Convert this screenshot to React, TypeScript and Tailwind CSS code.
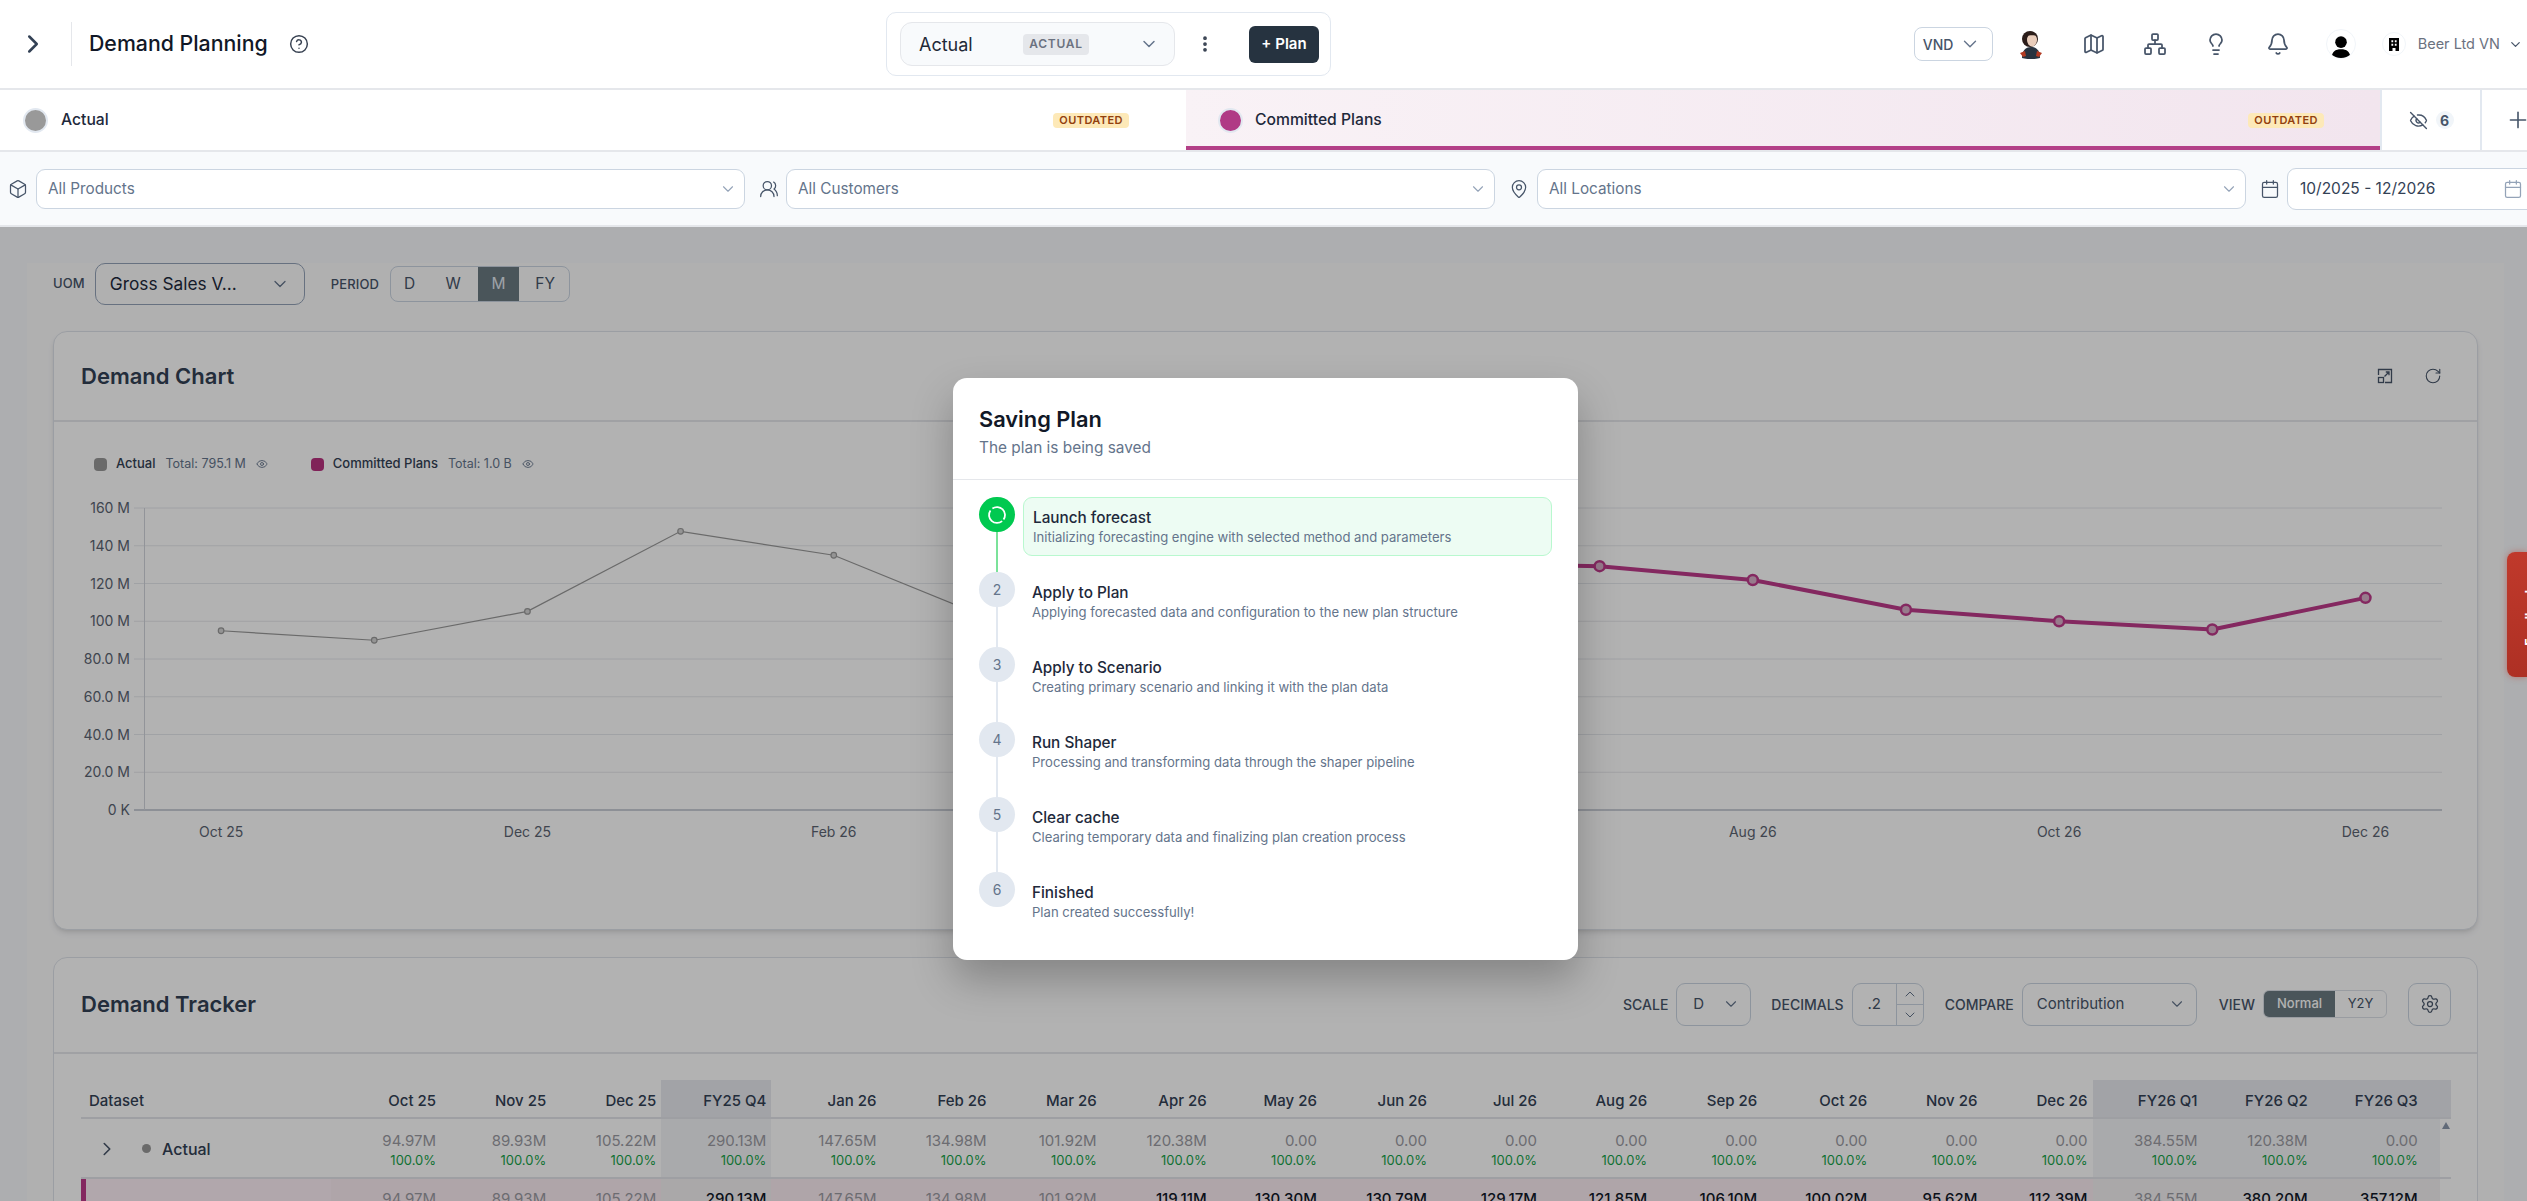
import React from "react";
import { ChevronRight, ChevronDown, ChevronUp, CircleHelp, EllipsisVertical, Map as MapIcon, Network, Lightbulb, Bell, EyeOff, Eye, Plus, Box, UsersRound, MapPin, Calendar, RotateCw, Settings } from "lucide-react";

const BADGE = "rounded-[4px] bg-[#fde9b8] px-[6px] h-[15px] flex items-center text-[11px] font-semibold tracking-[0.04em] text-[#92400e]";

function Outdated() {
  return <span className={BADGE}>OUTDATED</span>;
}

function Dot({ color }: { color: string }) {
  return <span className="block w-[25px] h-[25px] rounded-full border-2 border-[#e2e8f0]" style={{ background: color }} />;
}

function Avatar() {
  return (
    <svg width="30" height="30" viewBox="0 0 30 30">
      <circle cx="14" cy="10" r="8" fill="#2b1d1a" />
      <ellipse cx="16" cy="11" rx="5" ry="6.5" fill="#e9cdbb" />
      <path d="M10.5 7c2-4 9-4 11 0-3-1-8-1-11 0z" fill="#2b1d1a" />
      <path d="M6 29c0-7 3-11 9-11s9 4 9 11c-4 1.500-14 1.500-18 0z" fill="#28333f" />
      <path d="M4 24l5-2 1 5-3 1zM26 24l-5-2-1 5 3 1z" fill="#b23a22" />
    </svg>
  );
}

function UserBlack() {
  return (
    <div className="w-[30px] h-[30px] rounded-full border border-[#f1f5f9] overflow-hidden flex items-center justify-center">
      <svg width="30" height="30" viewBox="0 0 30 30">
        <circle cx="15" cy="13" r="6.2" fill="#000" />
        <path d="M5 30c0-7 4-9.500 10-9.500S25 23 25 30z" fill="#000" />
      </svg>
    </div>
  );
}

function Building() {
  return (
    <div className="w-[24px] h-[24px] rounded-full border border-[#f1f5f9] flex items-center justify-center">
      <svg width="12" height="13" viewBox="0 0 12 13">
        <path fillRule="evenodd" d="M1 0h10v13H7.500v-3h-3v3H1zM3.400 2.200v2h1.800v-2zM6.800 2.200v2h1.800v-2zM3.400 5.800v2h1.800v-2zM6.800 5.800v2h1.800v-2z" fill="#000" />
      </svg>
    </div>
  );
}

function Header() {
  return (
    <header className="flex h-[90px] shrink-0 items-center border-b-[2px] border-[#e5e7eb] bg-white">
      <div className="flex w-[886px] shrink-0 items-center">
        <div className="flex w-[72px] h-[44px] items-center justify-center border-r border-[#e5e7eb]">
          <ChevronRight size={30} strokeWidth={2} className="text-[#334155] mr-[6px]" />
        </div>
        <h1 className="ml-[17px] text-[21.300px] leading-none font-[450] text-[#111827]">Demand Planning</h1>
        <CircleHelp size={20} strokeWidth={1.75} className="ml-[21px] text-[#374151]" />
      </div>
      <div className="flex w-[445px] h-[64px] shrink-0 items-center rounded-[10px] border border-[#e2e8f0] pl-[13px]">
        <div className="flex w-[275px] h-[44px] items-center rounded-[12px] border border-[#e5e7eb] bg-[#f8fafc] pl-[18px]">
          <span className="w-[104px] text-[18px] text-[#1f2937]">Actual</span>
          <span className="flex h-[21px] w-[66px] items-center justify-center rounded-[4px] bg-[#e5e7eb] text-[12px] font-semibold tracking-[0.06em] text-[#6b7280]">ACTUAL</span>
          <ChevronDown size={20} strokeWidth={1.75} className="ml-[50px] text-[#64748b]" />
        </div>
        <EllipsisVertical size={20} strokeWidth={2.500} className="ml-[20px] text-[#374151]" />
        <button className="ml-[34px] flex h-[37px] w-[70px] items-center justify-center rounded-[6px] bg-[#263340] text-[15px] font-semibold text-white">+ Plan</button>
      </div>
      <div className="ml-auto flex items-center pr-[4px]">
        <div className="flex h-[34px] w-[79px] items-center rounded-[8px] border border-[#cbd5e1] pl-[8px]">
          <span className="text-[14px] font-medium text-[#475569]">VND</span>
          <ChevronDown size={22} strokeWidth={1.5} className="ml-[6px] text-[#64748b]" />
        </div>
        <div className="ml-[23px]"><Avatar /></div>
        <MapIcon size={24} strokeWidth={1.75} className="ml-[36px] text-[#475569]" />
        <Network size={24} strokeWidth={1.75} className="ml-[37px] text-[#475569]" />
        <Lightbulb size={24} strokeWidth={1.75} className="ml-[37px] text-[#475569]" />
        <Bell size={24} strokeWidth={1.75} className="ml-[38px] text-[#475569]" />
        <div className="ml-[36px]"><UserBlack /></div>
        <div className="ml-[26px]"><Building /></div>
        <span className="ml-[12px] text-[14.500px] text-[#6b7280]">Beer Ltd VN</span>
        <ChevronDown size={15} strokeWidth={2} className="ml-[8px] text-[#475569]" />
      </div>
    </header>
  );
}

function Tabs() {
  return (
    <div className="flex h-[62px] shrink-0 border-b-[2px] border-[#e5e7eb] bg-white">
      <div className="flex w-[1186px] shrink-0 items-center justify-between pl-[23px] pr-[57px]">
        <div className="flex items-center gap-[13px]">
          <Dot color="#999999" />
          <span className="text-[15.700px] font-[450] text-[#1e293b]">Actual</span>
        </div>
        <Outdated />
      </div>
      <div className="flex w-[1194px] shrink-0 items-center justify-between border-b-[4px] border-[#b33f87] bg-gradient-to-r from-[#f9f2f6] to-[#f2e5ee] pl-[32px] pr-[56px] pt-[4px]">
        <div className="flex items-center gap-[12px]">
          <Dot color="#b03a85" />
          <span className="text-[15.700px] font-[450] text-[#1e293b]">Committed Plans</span>
        </div>
        <Outdated />
      </div>
      <div className="flex w-[102px] shrink-0 items-center justify-center gap-[8px] border-x-[2px] border-[#e2e8f0]">
        <EyeOff size={19} strokeWidth={1.75} className="text-[#475569]" />
        <span className="flex h-[18px] w-[18px] items-center justify-center rounded-full bg-[#f1f5f9] text-[14px] font-bold text-[#475569]">6</span>
      </div>
      <div className="flex flex-1 items-center pl-[23px]">
        <Plus size={26} strokeWidth={1.5} className="shrink-0 text-[#475569]" />
      </div>
    </div>
  );
}

function FilterSelect({ label }: { label: string }) {
  return (
    <div className="flex h-[40px] w-[709px] shrink-0 items-center justify-between rounded-[9px] border border-[#cbd5e1] bg-white pl-[11px] pr-[7px]">
      <span className="pt-[1px] text-[15.300px] text-[#64748b]">{label}</span>
      <ChevronDown size={18} strokeWidth={1.5} className="text-[#94a3b8]" />
    </div>
  );
}

function Filters() {
  return (
    <div className="flex h-[75px] shrink-0 items-center border-b-[2px] border-[#e5e7eb] bg-[#f8fafc] pl-[8px]">
      <Box size={20} strokeWidth={1.5} className="shrink-0 text-[#475569]" />
      <div className="ml-[8px]"><FilterSelect label="All Products" /></div>
      <UsersRound size={20} strokeWidth={1.5} className="ml-[14px] shrink-0 text-[#475569]" />
      <div className="ml-[7px]"><FilterSelect label="All Customers" /></div>
      <MapPin size={20} strokeWidth={1.5} className="ml-[14px] shrink-0 text-[#475569]" />
      <div className="ml-[8px]"><FilterSelect label="All Locations" /></div>
      <Calendar size={20} strokeWidth={1.5} className="ml-[14px] shrink-0 text-[#475569]" />
      <div className="ml-[7px] flex h-[42px] w-[260px] shrink-0 items-center justify-between rounded-[9px] border border-[#cbd5e1] bg-white pl-[12px] pr-[23px]">
        <span className="text-[15.500px] text-[#334155]">10/2025 - 12/2026</span>
        <Calendar size={20} strokeWidth={1.5} className="text-[#94a3b8]" />
      </div>
    </div>
  );
}

function Label({ children }: { children: React.ReactNode }) {
  return <span className="text-[13px] font-medium tracking-[0.01em] text-[#475569]">{children}</span>;
}

function BigLabel({ children }: { children: React.ReactNode }) {
  return <span className="text-[14px] font-medium text-[#475569]">{children}</span>;
}

function Toolbar() {
  return (
    <div className="flex h-[42px] items-center">
      <Label>UOM</Label>
      <div className="ml-[10px] flex h-[42px] w-[210px] items-center justify-between rounded-[10px] border border-[#94a3b8] pl-[14px] pr-[14px]">
        <span className="text-[17.300px] text-[#1e293b]">Gross Sales V...</span>
        <ChevronDown size={20} strokeWidth={1.5} className="text-[#64748b]" />
      </div>
      <span className="ml-[26px] pb-[2px]"><Label>PERIOD</Label></span>
      <div className="ml-[11px] flex h-[36px] w-[180px] items-center overflow-hidden rounded-[8px] border border-[#cbd5e1] text-[15.500px] text-[#475569]">
        <span className="flex w-[37px] justify-center">D</span>
        <span className="flex w-[50px] justify-center">W</span>
        <span className="flex h-full w-[41px] items-center justify-center bg-[#6b7a81] text-[#e2e8f0]">M</span>
        <span className="flex flex-1 justify-center pl-[2px]">FY</span>
      </div>
    </div>
  );
}

const ORIGIN_X = 53;
const ORIGIN_Y = 490;
const colX = (i: number) => 144.500 + 153.170 * (i + 0.500);
const yOf = (v: number) => 810 - v * 1.8875;
const ACTUAL = [94.970, 89.930, 105.220, 147.650, 134.980, 101.920, 120.380];
const COMMITTED = [119.110, 130.300, 130.790, 129.170, 121.850, 106.100, 100.020, 95.620, 112.390];
const YL = ["160 M", "140 M", "120 M", "100 M", "80.0 M", "60.0 M", "40.0 M", "20.0 M", "0 K"];
const XL = ["Oct 25", "", "Dec 25", "", "Feb 26", "", "Apr 26", "", "Jun 26", "", "Aug 26", "", "Oct 26", "", "Dec 26"];

function ChartSvg() {
  const actual = ACTUAL.map((v, i) => `${colX(i)},${yOf(v)}`).join(" ");
  const committed = COMMITTED.map((v, i) => `${colX(i + 6)},${yOf(v)}`).join(" ");
  return (
    <svg width="2424" height="370" viewBox={`${ORIGIN_X} ${ORIGIN_Y} 2424 370`} className="block">
      {YL.map((l, i) => {
        const y = 508 + 37.750 * i;
        return (
          <g key={l}>
            <line x1="134" x2="2442" y1={y} y2={y} stroke={i === 8 ? "#b8bfca" : "#e6e8ec"} strokeWidth={i === 8 ? 1.500 : 1} />
            <text x="130" y={y + 5} textAnchor="end" fontSize="14" fill="#5b6472">{l}</text>
          </g>
        );
      })}
      <line x1="144.500" x2="144.500" y1="508" y2="810" stroke="#d1d5db" />
      {XL.map((l, i) => l && <text key={l} x={colX(i)} y="837" textAnchor="middle" fontSize="14" fill="#5b6472">{l}</text>)}
      <polyline points={committed} fill="none" stroke="#bd3a8a" strokeWidth="4" />
      {COMMITTED.map((v, i) => <circle key={i} cx={colX(i + 6)} cy={yOf(v)} r="5" fill="#d9b0c9" stroke="#bd3a8a" strokeWidth="2.500" />)}
      <polyline points={actual} fill="none" stroke="#999999" strokeWidth="1.200" />
      {ACTUAL.map((v, i) => <circle key={i} cx={colX(i)} cy={yOf(v)} r="2.800" fill="#d4d4d4" stroke="#999999" strokeWidth="1.200" />)}
    </svg>
  );
}

function ExpandIcon() {
  return (
    <svg width="18" height="18" viewBox="0 0 18 18" fill="none" stroke="#475569" strokeWidth="1.300">
      <path d="M6 2.500h9.500v13H9" />
      <path d="M2.500 8V2.500H6" />
      <rect x="2.500" y="10.500" width="5" height="5" />
      <path d="M8.500 9.500L13 5M9.800 5H13v3.200" />
    </svg>
  );
}

function LegendItem({ color, name, total }: { color: string; name: string; total: string }) {
  return (
    <div className="flex items-center">
      <span className="h-[13px] w-[13px] rounded-[4px]" style={{ background: color }} />
      <span className="ml-[9px] text-[13px] font-[450] text-[#334155]">{name}</span>
      <span className="ml-[10px] text-[12.500px] whitespace-nowrap text-[#64748b]">{total}</span>
      <Eye size={12} strokeWidth={1.75} className="ml-[10px] text-[#64748b]" />
    </div>
  );
}

function ChartCard() {
  return (
    <section className="mt-[26px] h-[599px] overflow-hidden rounded-[14px] border border-[#dfe3ea] bg-white shadow-md">
      <div className="flex h-[90px] items-center justify-between border-b-[2px] border-[#e5e7eb] pl-[27px] pr-[35px]">
        <h2 className="text-[22px] font-semibold text-[#334155]">Demand Chart</h2>
        <div className="flex items-center gap-[30px]">
          <ExpandIcon />
          <RotateCw size={18} strokeWidth={1.5} className="text-[#475569]" />
        </div>
      </div>
      <div className="pt-[32px]">
        <div className="flex h-[20px] items-center gap-[43px] pl-[40px]">
          <LegendItem color="#999999" name="Actual" total="Total: 795.1 M" />
          <LegendItem color="#b8327f" name="Committed Plans" total="Total: 1.0 B" />
        </div>
        <div className="mt-[16px] -ml-px"><ChartSvg /></div>
      </div>
    </section>
  );
}

const HEAD = ["Oct 25", "Nov 25", "Dec 25", "FY25 Q4", "Jan 26", "Feb 26", "Mar 26", "Apr 26", "May 26", "Jun 26", "Jul 26", "Aug 26", "Sep 26", "Oct 26", "Nov 26", "Dec 26", "FY26 Q1", "FY26 Q2", "FY26 Q3"];
const ROW1 = ["94.97M", "89.93M", "105.22M", "290.13M", "147.65M", "134.98M", "101.92M", "120.38M", "0.00", "0.00", "0.00", "0.00", "0.00", "0.00", "0.00", "0.00", "384.55M", "120.38M", "0.00"];
const ROW2 = ["94.97M", "89.93M", "105.22M", "290.13M", "147.65M", "134.98M", "101.92M", "119.11M", "130.30M", "130.79M", "129.17M", "121.85M", "106.10M", "100.02M", "95.62M", "112.39M", "384.55M", "380.20M", "357.12M"];
const isFy = (i: number) => i === 3 || i >= 16;
const isDark2 = (i: number) => i === 3 || (i >= 7 && i !== 16);

function TrackerTable() {
  return (
    <div className="ml-[27px] mr-[26px] mt-[26px]">
      <div className="flex h-[39px] border-b-[2px] border-[#e2e4ea] text-[15px] font-[450] text-[#334155]">
        <div className="flex w-[250px] shrink-0 items-center pl-[8px] pt-[5px]">Dataset</div>
        {HEAD.map((h, i) => (
          <div key={h} className={`flex h-full w-[110.100px] shrink-0 items-center justify-end pr-[5px] pt-[5px] ${isFy(i) ? "bg-[#e8eaf0]" : ""}`}>{h}</div>
        ))}
        <div className="h-full flex-1 bg-[#e8eaf0]" />
      </div>
      <div className="flex h-[60px] border-b-[2px] border-[#e2e4ea]">
        <div className="flex w-[250px] shrink-0 items-center pl-[15px] pt-[1px]">
          <ChevronRight size={22} strokeWidth={1.75} className="text-[#475569]" />
          <span className="ml-[24px] h-[9px] w-[9px] rounded-full bg-[#999999]" />
          <span className="ml-[11px] text-[16px] font-[450] text-[#334155]">Actual</span>
        </div>
        {ROW1.map((v, i) => (
          <div key={i} className={`w-[110.100px] shrink-0 pr-[5px] pt-[13px] text-right ${isFy(i) ? "bg-[#f3f4f6]" : ""}`}>
            <div className="text-[15px] leading-[18px] text-[#9b9ba3]">{v}</div>
            <div className="text-[13px] leading-[20px] text-[#16a34a]">100.0%</div>
          </div>
        ))}
        <div className="w-[17px] shrink-0 bg-[#f3f4f6]" />
        <div className="relative flex-1"><span className="absolute left-[2px] top-[3px] h-0 w-0 border-x-[4px] border-b-[7px] border-x-transparent border-b-[#8c99ad]" /></div>
      </div>
      <div className="flex h-[60px]">
        <div className="w-[250px] shrink-0 border-l-[5px] border-[#bd3a8a] bg-[#fef0f7]" />
        {ROW2.map((v, i) => (
          <div key={i} className={`w-[110.100px] shrink-0 pr-[5px] pt-[10px] text-right text-[15px] leading-[20px] ${isFy(i) ? "bg-[#f4f1f3]" : "bg-[#fbecf2]"} ${isDark2(i) ? "font-[450] text-[#111827]" : "text-[#9b9ba3]"}`}>{v}</div>
        ))}
        <div className="w-[17px] shrink-0 bg-[#f4f1f3]" />
      </div>
    </div>
  );
}

function TrackerCard() {
  return (
    <section className="mt-[27px] rounded-[14px] border border-[#dfe3ea] bg-white">
      <div className="flex h-[96px] items-center justify-between border-b-[2px] border-[#e5e7eb] pl-[27px] pr-[26px]">
        <h2 className="pb-[2px] text-[22px] font-semibold text-[#334155]">Demand Tracker</h2>
        <div className="flex items-center pb-[2px]">
          <BigLabel>SCALE</BigLabel>
          <div className="ml-[8px] flex h-[43px] w-[75px] items-center justify-between rounded-[9px] border border-[#cbd5e1] pl-[16px] pr-[10px]">
            <span className="text-[15px] text-[#475569]">D</span>
            <ChevronDown size={18} strokeWidth={1.5} className="text-[#64748b]" />
          </div>
          <span className="ml-[20px]"><BigLabel>DECIMALS</BigLabel></span>
          <div className="ml-[8px] flex h-[43px] w-[72px] rounded-[9px] border border-[#cbd5e1]">
            <span className="flex w-[43px] items-center justify-center text-[15px] text-[#475569]">.2</span>
            <div className="flex flex-1 flex-col border-l border-[#cbd5e1]">
              <span className="flex flex-1 items-center justify-center border-b border-[#cbd5e1]"><ChevronUp size={16} strokeWidth={1.5} className="text-[#64748b]" /></span>
              <span className="flex flex-1 items-center justify-center"><ChevronDown size={16} strokeWidth={1.5} className="text-[#64748b]" /></span>
            </div>
          </div>
          <span className="ml-[21px]"><BigLabel>COMPARE</BigLabel></span>
          <div className="ml-[8px] flex h-[43px] w-[175px] items-center justify-between rounded-[9px] border border-[#cbd5e1] pl-[14px] pr-[10px]">
            <span className="text-[15px] text-[#475569]">Contribution</span>
            <ChevronDown size={18} strokeWidth={1.5} className="text-[#64748b]" />
          </div>
          <span className="ml-[22px]"><BigLabel>VIEW</BigLabel></span>
          <div className="ml-[8px] flex h-[28px] w-[124px] items-center overflow-hidden rounded-[6px] border border-[#dbe0e7] text-[13px]">
            <span className="flex h-full w-[71px] items-center justify-center bg-[#6b7a81] font-medium text-white">Normal</span>
            <span className="flex flex-1 justify-center text-[#475569]">Y2Y</span>
          </div>
          <div className="ml-[21px] flex h-[43px] w-[43px] items-center justify-center rounded-[9px] border border-[#cbd5e1]">
            <Settings size={20} strokeWidth={1.5} className="text-[#475569]" />
          </div>
        </div>
      </div>
      <TrackerTable />
    </section>
  );
}

const STEPS = [
  ["Launch forecast", "Initializing forecasting engine with selected method and parameters"],
  ["Apply to Plan", "Applying forecasted data and configuration to the new plan structure"],
  ["Apply to Scenario", "Creating primary scenario and linking it with the plan data"],
  ["Run Shaper", "Processing and transforming data through the shaper pipeline"],
  ["Clear cache", "Clearing temporary data and finalizing plan creation process"],
  ["Finished", "Plan created successfully!"],
];

function Spinner() {
  return (
    <svg width="20" height="20" viewBox="0 0 20 20" fill="none" stroke="#ffffff" strokeWidth="1.750">
      <path d="M5.410 3.450A8 8 0 0 1 16.550 14.590" />
      <path d="M15.140 16.130A8 8 0 0 1 3.450 5.410" />
    </svg>
  );
}

function SavingModal() {
  return (
    <div className="absolute left-[953px] top-[378px] h-[582px] w-[625px] rounded-[14px] bg-white shadow-[0_20px_40px_rgba(0,0,0,0.25)]">
      <div className="h-[102px] border-b border-[#e5e7eb] pl-[26px] pt-[27px]">
        <h3 className="text-[21.800px] leading-[28px] font-semibold text-[#111827]">Saving Plan</h3>
        <p className="mt-[5px] text-[15.400px] leading-[20px] text-[#64748b]">The plan is being saved</p>
      </div>
      <div className="px-[26px] pt-[17px]">
        {STEPS.map(([t, d], i) => (
          <div key={t} className="relative flex h-[75px]">
            <div className={`relative z-10 flex h-[35px] w-[36px] shrink-0 items-center justify-center rounded-full text-[14px] text-[#64748b] ${i === 0 ? "bg-[#00c950]" : "bg-[#e2e8f0]"}`}>
              {i === 0 ? <Spinner /> : i + 1}
            </div>
            {i < 5 && <span className={`absolute left-[16.500px] top-[35px] h-[40px] w-[2px] ${i === 0 ? "bg-[#7be29a]" : "bg-[#e2e8f0]"}`} />}
            <div className={`ml-[8px] h-[59px] flex-1 rounded-[9px] border pt-[9px] ${i === 0 ? "border-[#b9f8cf] bg-[#edfcf3] pl-[9px]" : "border-transparent pl-[8px]"}`}>
              <div className="text-[15.300px] leading-[22px] font-[450] text-[#1e293b]">{t}</div>
              <div className="text-[13.100px] leading-[16px] text-[#64748b]">{d}</div>
            </div>
          </div>
        ))}
      </div>
    </div>
  );
}

export default function App() {
  return (
    <div className="relative flex h-screen w-full flex-col overflow-hidden bg-[#f8fafc] font-[Inter,sans-serif]">
      <Header />
      <Tabs />
      <Filters />
      <main className="ml-[27px] mr-[23px] mt-[36px] flex-1 overflow-hidden bg-[#fcfcfd] px-[26px]">
        <Toolbar />
        <ChartCard />
        <TrackerCard />
      </main>
      <div className="absolute inset-x-0 bottom-0 top-[227px] bg-black/30" />
      <div className="absolute right-0 top-[552px] flex h-[125px] w-[20px] items-start overflow-hidden rounded-l-[8px] bg-gradient-to-b from-[#c0392b] to-[#ae3024] pl-[18px] pt-[34px] shadow-[0_0_6px_rgba(192,57,43,0.5)]">
        <span className="rotate-180 whitespace-nowrap text-[12.500px] leading-[12px] font-bold text-white [writing-mode:vertical-rl]">Feedback</span>
      </div>
      <SavingModal />
    </div>
  );
}
